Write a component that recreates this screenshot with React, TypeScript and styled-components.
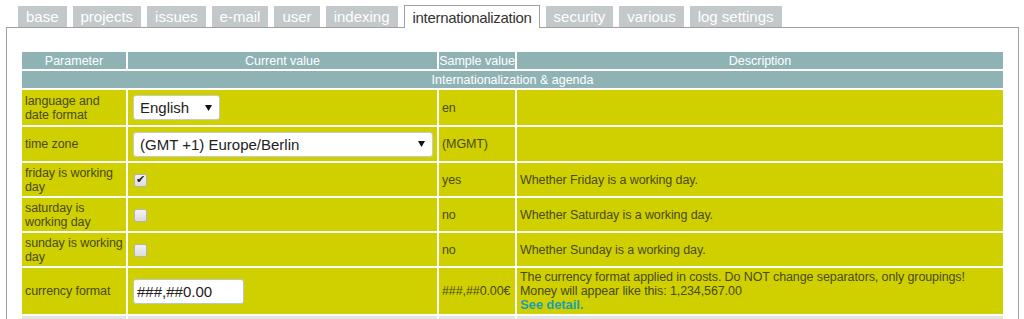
import styled, { createGlobalStyle } from 'styled-components'

const GlobalStyle = createGlobalStyle`
	body {
		margin: 0;
		background: #fff;
		font-family: 'Liberation Sans', Arial, sans-serif;
	}
`

const Page = styled.div`
	padding: 5px 5px 0 6px;
`

const TabBar = styled.div`
	display: flex;
	gap: 6px;
	padding-left: 12px;
	align-items: flex-end;
	position: relative;
	z-index: 1;
	margin-bottom: -1px;
`

const Tab = styled.div<{ $active?: boolean }>`
	height: ${({ $active }) => ($active ? '23px' : '21px')};
	padding: 0 ${({ $active }) => ($active ? '7px 0 8px' : '8px')};
	box-sizing: border-box;
	display: flex;
	align-items: center;
	font-size: 15px;
	letter-spacing: ${({ $active }) => ($active ? '-0.3px' : '0')};
	color: ${({ $active }) => ($active ? '#333' : '#fff')};
	background: ${({ $active }) => ($active ? '#fff' : '#c3c9ca')};
	border: ${({ $active }) => ($active ? '1px solid #a0a0a0' : 'none')};
	border-bottom: none;
	margin-bottom: ${({ $active }) => ($active ? '0' : '1px')};
`

const Panel = styled.div`
	border: 1px solid #a0a0a0;
	border-bottom: none;
	padding: 22px 13px 0 13px;
	height: 300px;
	box-sizing: border-box;
	overflow: hidden;
`

const Table = styled.table`
	border-collapse: separate;
	border-spacing: 2px;
	width: 985px;
	table-layout: fixed;
	font-size: 12.5px;
`

const HeadCell = styled.th`
	background: #8fb3b5;
	color: #fff;
	font-weight: normal;
	height: 17px;
	padding: 0;
	font-size: 12.5px;
	white-space: nowrap;
	overflow: hidden;
`

const SectionCell = styled.td`
	background: #8fb3b5;
	color: #fff;
	text-align: center;
	height: 17px;
	padding: 0;
	font-size: 12.5px;
`

const Cell = styled.td<{ $h?: number }>`
	background: #d0d000;
	color: #4a4a1a;
	padding: 0 1px 0 3px;
	height: ${({ $h }) => $h ?? 35}px;
	vertical-align: middle;
	line-height: 14px;
	letter-spacing: -0.1px;
`

const GrayCell = styled.td`
	background: #e4e4e4;
	height: 10px;
	padding: 0;
`

const Select = styled.select<{ $w: number }>`
	width: ${({ $w }) => $w}px;
	height: 25px;
	margin-left: 2px;
	font-family: 'Liberation Sans', Arial, sans-serif;
	font-size: 15px;
	color: #222;
	background: #fff;
	border: 1px solid #c8c8c8;
	border-radius: 3px;
	padding: 0 6px;
	appearance: none;
	background-image: url("data:image/svg+xml,%3Csvg xmlns='http://www.w3.org/2000/svg' width='8' height='6'%3E%3Cpath d='M0 0h7L3.5 6z' fill='%23111'/%3E%3C/svg%3E");
	background-repeat: no-repeat;
	background-position: right 6px center;
`

const Check = styled.input`
	appearance: none;
	margin: 0 0 0 3px;
	width: 13px;
	height: 13px;
	box-sizing: border-box;
	vertical-align: middle;
	border: 1px solid #b4b4b4;
	border-radius: 2px;
	background: linear-gradient(#f2f2f2, #dcdcdc);
	position: relative;

	&:checked::after {
		content: '✔';
		position: absolute;
		left: 1px;
		top: -2px;
		font-size: 11px;
		color: #222;
	}
`

const TextInput = styled.input`
	width: 111px;
	height: 25px;
	box-sizing: border-box;
	margin-left: 2px;
	border: 1px solid #b8c8c8;
	border-radius: 3px;
	font-family: 'Liberation Sans', Arial, sans-serif;
	font-size: 15px;
	padding: 0 3px;
	color: #222;
`

const Link = styled.a`
	color: #1a9fb0;
	font-weight: bold;
	text-decoration: none;
	font-size: 13px;
`

const tabs = [
	'base',
	'projects',
	'issues',
	'e-mail',
	'user',
	'indexing',
	'internationalization',
	'security',
	'various',
	'log settings',
]

export default function App() {
	return (
		<>
			<GlobalStyle />
			<Page>
				<TabBar>
					{tabs.map(t => (
						<Tab key={t} $active={t === 'internationalization'}>
							{t}
						</Tab>
					))}
				</TabBar>
				<Panel>
					<Table>
						<colgroup>
							<col style={{ width: 104 }} />
							<col style={{ width: 309 }} />
							<col style={{ width: 76 }} />
							<col />
						</colgroup>
						<thead>
							<tr>
								<HeadCell>Parameter</HeadCell>
								<HeadCell>Current value</HeadCell>
								<HeadCell>Sample value</HeadCell>
								<HeadCell>Description</HeadCell>
							</tr>
						</thead>
						<tbody>
							<tr>
								<SectionCell colSpan={4}>Internationalization &amp; agenda</SectionCell>
							</tr>
							<tr>
								<Cell>language and date format</Cell>
								<Cell>
									<Select $w={87} defaultValue='en'>
										<option value='en'>English</option>
									</Select>
								</Cell>
								<Cell>en</Cell>
								<Cell />
							</tr>
							<tr>
								<Cell $h={34}>time zone</Cell>
								<Cell $h={34}>
									<Select $w={300} defaultValue='berlin'>
										<option value='berlin'>(GMT +1) Europe/Berlin</option>
									</Select>
								</Cell>
								<Cell $h={34}>(MGMT)</Cell>
								<Cell $h={34} />
							</tr>
							<tr>
								<Cell $h={33}>friday is working day</Cell>
								<Cell $h={33}>
									<Check type='checkbox' defaultChecked />
								</Cell>
								<Cell $h={33}>yes</Cell>
								<Cell $h={33}>Whether Friday is a working day.</Cell>
							</tr>
							<tr>
								<Cell $h={33}>saturday is working day</Cell>
								<Cell $h={33}>
									<Check type='checkbox' />
								</Cell>
								<Cell $h={33}>no</Cell>
								<Cell $h={33}>Whether Saturday is a working day.</Cell>
							</tr>
							<tr>
								<Cell $h={33}>sunday is working day</Cell>
								<Cell $h={33}>
									<Check type='checkbox' />
								</Cell>
								<Cell $h={33}>no</Cell>
								<Cell $h={33}>Whether Sunday is a working day.</Cell>
							</tr>
							<tr>
								<Cell $h={46}>currency format</Cell>
								<Cell $h={46}>
									<TextInput defaultValue='###,##0.00' />
								</Cell>
								<Cell $h={46}>###,##0.00€</Cell>
								<Cell $h={46}>
									The currency format applied in costs. Do NOT change separators, only groupings!
									<br />
									Money will appear like this: 1,234,567.00
									<br />
									<Link href='#'>See detail.</Link>
								</Cell>
							</tr>
							<tr>
								<GrayCell />
								<GrayCell />
								<GrayCell />
								<GrayCell />
							</tr>
						</tbody>
					</Table>
				</Panel>
			</Page>
		</>
	)
}
